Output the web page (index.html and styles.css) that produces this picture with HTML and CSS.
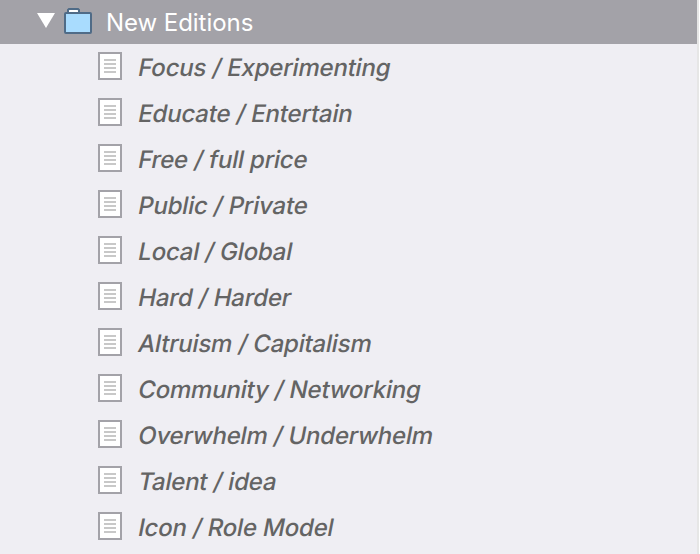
FILE: index.html
```html
<!DOCTYPE html>
<html lang="en">
<head>
    <meta charset="UTF-8">
    <title>New Editions</title>
    <link rel="stylesheet" href="styles.css">
</head>
<body>
    <svg class="symbols" width="0" height="0">
        <symbol id="page" viewBox="0 0 24 28">
            <rect x="1" y="1" width="22" height="26" fill="#fff" stroke="#a3a2a8" stroke-width="2"/>
            <path d="M6 8h12M6 12h12M6 16h12M6 20h12" stroke="#c8c8c8" stroke-width="2"/>
        </symbol>
    </svg>
    <div class="sidebar">
        <div class="folder">
            <svg class="arrow" viewBox="0 0 18 15"><path d="M0 0h18L9 15z" fill="#fff"/></svg>
            <svg class="folder-icon" viewBox="0 0 28 26">
                <path d="M4 5V2l1-1h9l1 1v3" fill="#fff" stroke="#4f6b87" stroke-width="2"/>
                <rect x="1" y="5" width="26" height="20" rx="1" fill="#a9dcfe" stroke="#4f6b87" stroke-width="2"/>
            </svg>
            <span class="folder-name">New Editions</span>
        </div>
        <ul class="pages">
            <li><svg class="page-icon"><use href="#page"/></svg><span>Focus / Experimenting</span></li>
            <li><svg class="page-icon"><use href="#page"/></svg><span>Educate / Entertain</span></li>
            <li><svg class="page-icon"><use href="#page"/></svg><span>Free / full price</span></li>
            <li><svg class="page-icon"><use href="#page"/></svg><span>Public / Private</span></li>
            <li><svg class="page-icon"><use href="#page"/></svg><span>Local / Global</span></li>
            <li><svg class="page-icon"><use href="#page"/></svg><span>Hard / Harder</span></li>
            <li><svg class="page-icon"><use href="#page"/></svg><span>Altruism / Capitalism</span></li>
            <li><svg class="page-icon"><use href="#page"/></svg><span>Community / Networking</span></li>
            <li><svg class="page-icon"><use href="#page"/></svg><span>Overwhelm / Underwhelm</span></li>
            <li><svg class="page-icon"><use href="#page"/></svg><span>Talent / idea</span></li>
            <li><svg class="page-icon"><use href="#page"/></svg><span>Icon / Role Model</span></li>
        </ul>
    </div>
</body>
</html>
```
FILE: styles.css
```css
body {
    margin: 0;
    background-color: #fff;
    font-family: Inter, sans-serif;
    font-size: 24px;
}
.symbols {
    display: block;
}
.sidebar {
    width: 697px;
    height: 554px;
    overflow: hidden;
    background-color: #efeef3;
    border-right: 2px solid #e6e6e6;
}
.folder {
    display: flex;
    align-items: center;
    height: 44px;
    padding-left: 37px;
    background-color: #a3a2a8;
    color: #fff;
}
.arrow {
    width: 18px;
    height: 15px;
    margin-right: 9px;
    margin-bottom: 3px;
}
.folder-icon {
    width: 28px;
    height: 26px;
    margin-right: 14px;
    margin-bottom: 2px;
}
.folder-name {
    letter-spacing: -0.05px;
}
.pages {
    list-style: none;
    margin: 0;
    padding: 0;
}
.pages li {
    display: flex;
    align-items: center;
    gap: 15px;
    height: 46px;
    padding-left: 98px;
    color: #646464;
    font-weight: 450;
    letter-spacing: -0.21px;
    white-space: nowrap;
}
/* slant the upright face so the letters keep their roman shapes */
.pages span {
    transform: skewX(-11deg);
    transform-origin: 0 80%;
}
.page-icon {
    width: 24px;
    height: 28px;
    margin-bottom: 2px;
}
```
